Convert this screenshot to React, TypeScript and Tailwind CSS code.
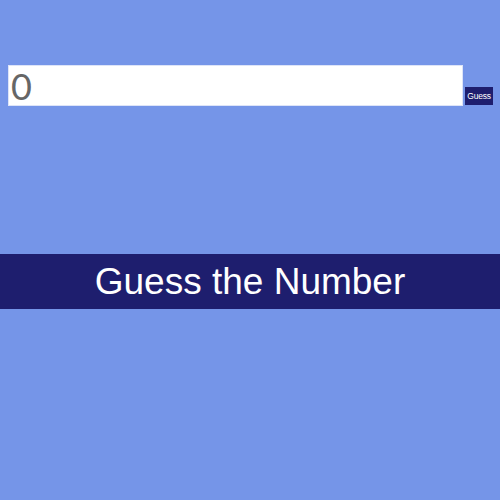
import { useState } from "react";

export default function App() {
  const [value, setValue] = useState("0");

  return (
    <div className="min-h-[500px] w-full bg-[#7595e8] font-['Liberation_Sans',Arial,sans-serif]">
      {/* Guess form */}
      <div className="flex items-end gap-[2px] pl-2 pt-[65px]">
        <input
          value={value}
          onChange={(e) => setValue(e.target.value)}
          className="h-[41px] w-[455px] shrink-0 border border-[#dde4f8] bg-white pl-[2px] font-['Lato',sans-serif] text-[36px] leading-none text-[#666] outline-none"
        />
        <button className="mb-[1px] h-[18px] w-[28px] shrink-0 bg-[#1e1e6e] px-0 text-[8.5px] leading-none tracking-tight text-white">
          Guess
        </button>
      </div>

      {/* Title banner */}
      <div className="mt-[148px] flex h-[55px] items-center justify-center bg-[#1e1e6e]">
        <h1 className="text-[37px] leading-none text-white">Guess the Number</h1>
      </div>
    </div>
  );
}
